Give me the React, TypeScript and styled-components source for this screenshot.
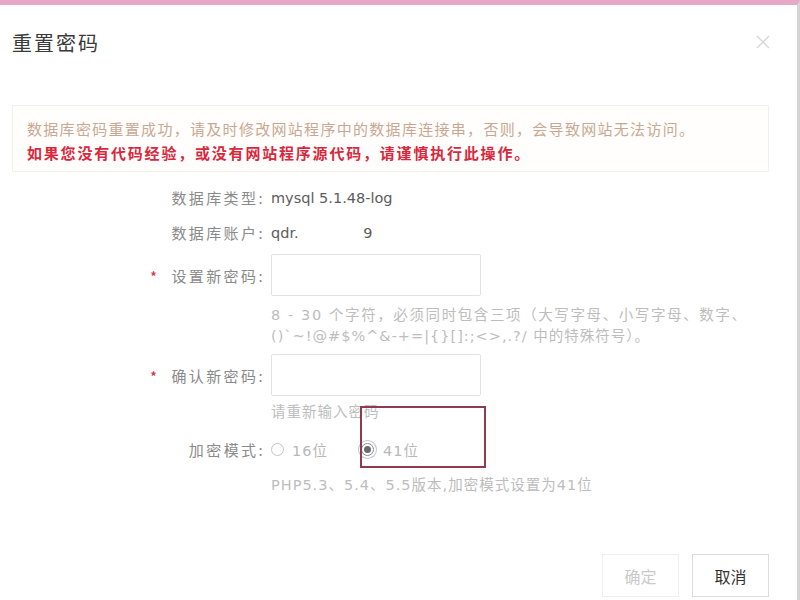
import React from "react";
import styled, { createGlobalStyle } from "styled-components";

const GlobalStyle = createGlobalStyle`
    html, body {
        margin: 0;
        padding: 0;
        background: #ffffff;
    }
    body {
        font-family: "Liberation Sans", "Noto Sans CJK SC", sans-serif;
        color: #555;
    }
`;

const Frame = styled.div`
    position: relative;
    width: 800px;
    height: 600px;
    box-sizing: border-box;
    border-top: 5px solid #e6a8c4;
    border-right: 3px solid #d4d4d4;
    background: #fff;
    overflow: hidden;
`;

const Header = styled.div`
    display: flex;
    align-items: center;
    justify-content: space-between;
    height: 74px;
    padding: 0 26px 0 12px;
`;

const Title = styled.h2`
    margin: 0;
    font-family: "Noto Sans CJK SC", sans-serif;
    font-size: 20px;
    font-weight: 400;
    letter-spacing: 2px;
    color: #3a3a3a;
`;

const Close = styled.button`
    border: none;
    background: none;
    padding: 0;
    width: 16px;
    height: 16px;
    cursor: pointer;
`;

const Notice = styled.div`
    margin: 26px 28px 0 12px;
    padding: 11px 14px 6px;
    border: 1px solid #f4efe9;
    background: #fffefc;
    font-family: "Noto Sans CJK SC", sans-serif;
    font-size: 15px;
    line-height: 24px;
`;

const NoticeLine = styled.div<{ $strong?: boolean }>`
    color: ${(p) => (p.$strong ? "#d8283e" : "#c9a893")};
    font-weight: ${(p) => (p.$strong ? 700 : 400)};
    letter-spacing: ${(p) => (p.$strong ? "1.8px" : "1.3px")};
    white-space: nowrap;
`;

const Form = styled.div`
    display: flex;
    flex-direction: column;
    margin-top: 8px;
`;

const Row = styled.div<{ $top?: number; $height?: number }>`
    display: grid;
    grid-template-columns: 265px 1fr;
    column-gap: 6px;
    align-items: center;
    margin-top: ${(p) => p.$top ?? 0}px;
    min-height: ${(p) => p.$height ?? 35}px;
`;

const Label = styled.div<{ $required?: boolean }>`
    position: relative;
    text-align: right;
    font-family: "Noto Sans CJK SC", sans-serif;
    font-size: 15px;
    letter-spacing: 2.4px;
    color: #8a8a8a;

    &::before {
        content: ${(p) => (p.$required ? '"*"' : '""')};
        position: absolute;
        left: 150px;
        top: 1px;
        color: #d8283e;
        font-size: 15px;
    }
`;

const Value = styled.div`
    font-family: "DejaVu Sans", "Noto Sans CJK SC", sans-serif;
    font-size: 14.5px;
    color: #5c5c5c;
    white-space: pre;
`;

const TextInput = styled.input`
    box-sizing: border-box;
    width: 210px;
    height: 42px;
    border: 1px solid #e2e2e2;
    border-radius: 2px;
    outline: none;
    padding: 0 10px;
    font-size: 14px;
`;

const Hint = styled.div<{ $lh?: number; $spacing?: number }>`
    font-family: "DejaVu Sans", "Noto Sans CJK SC", sans-serif;
    font-size: 14.5px;
    line-height: ${(p) => p.$lh ?? 21}px;
    letter-spacing: ${(p) => p.$spacing ?? 1}px;
    color: #bdbdbd;
    white-space: nowrap;
`;

const RadioGroup = styled.div`
    display: flex;
    align-items: center;
    gap: 30px;
`;

const RadioOption = styled.label`
    display: flex;
    align-items: center;
    gap: 8px;
    font-family: "DejaVu Sans", "Noto Sans CJK SC", sans-serif;
    font-size: 14.5px;
    letter-spacing: 1px;
    color: #b8b8b8;
`;

const RadioMark = styled.span<{ $checked?: boolean }>`
    position: relative;
    display: inline-block;
    box-sizing: border-box;
    width: 13px;
    height: 13px;
    border-radius: 50%;
    border: 1px solid ${(p) => (p.$checked ? "#8a8a8a" : "#c4c4c4")};
    background: #fff;
    box-shadow: ${(p) =>
        p.$checked ? "0 0 0 2px #fff, 0 0 0 3px #b9c3d6" : "none"};
    margin: ${(p) => (p.$checked ? "0 1px 0 3px" : "0")};

    &::after {
        content: "";
        display: ${(p) => (p.$checked ? "block" : "none")};
        position: absolute;
        left: 2px;
        top: 2px;
        width: 7px;
        height: 7px;
        border-radius: 50%;
        background: #6a6a6a;
    }
`;

const Highlight = styled.div`
    position: absolute;
    left: 360px;
    top: 401px;
    width: 126px;
    height: 62px;
    box-sizing: border-box;
    border: 2px solid #8f3a50;
    pointer-events: none;
`;

const Footer = styled.div`
    position: absolute;
    right: 28px;
    bottom: 0;
    display: flex;
    gap: 13px;
`;

const Button = styled.button<{ $disabled?: boolean }>`
    box-sizing: border-box;
    width: 77px;
    height: 43px;
    border: 1px solid ${(p) => (p.$disabled ? "#efefef" : "#dcdcdc")};
    background: #fff;
    font-family: "Noto Sans CJK SC", sans-serif;
    font-size: 16px;
    color: ${(p) => (p.$disabled ? "#c9c9c9" : "#333")};
    margin-bottom: ${(p) => (p.$disabled ? "-1px" : "3px")};
`;

const CloseIcon = () => (
    <svg width="16" height="16" viewBox="0 0 16 16">
        <path d="M2 2 L14 14 M14 2 L2 14" stroke="#d6d6d6" strokeWidth="1.3" />
    </svg>
);

export default function App() {
    return (
        <>
            <GlobalStyle />
            <Frame>
                <Header>
                    <Title>重置密码</Title>
                    <Close aria-label="关闭">
                        <CloseIcon />
                    </Close>
                </Header>

                <Notice>
                    <NoticeLine>
                        数据库密码重置成功，请及时修改网站程序中的数据库连接串，否则，会导致网站无法访问。
                    </NoticeLine>
                    <NoticeLine $strong>
                        如果您没有代码经验，或没有网站程序源代码，请谨慎执行此操作。
                    </NoticeLine>
                </Notice>

                <Form>
                    <Row>
                        <Label>数据库类型:</Label>
                        <Value>mysql 5.1.48-log</Value>
                    </Row>
                    <Row>
                        <Label>数据库账户:</Label>
                        <Value>{"qdr.              9"}</Value>
                    </Row>
                    <Row $top={4} $height={42}>
                        <Label $required>设置新密码:</Label>
                        <TextInput type="password" />
                    </Row>
                    <Row $top={9}>
                        <span />
                        <div>
                            <Hint $spacing={1.6}>
                                8 - 30 个字符，必须同时包含三项（大写字母、小写字母、数字、
                            </Hint>
                            <Hint $spacing={1}>
                                ()`~!@#$%^&amp;-+=|{"{}"}[]:;&lt;&gt;,.?/ 中的特殊符号）。
                            </Hint>
                        </div>
                    </Row>
                    <Row $top={7} $height={42}>
                        <Label $required>确认新密码:</Label>
                        <TextInput type="password" />
                    </Row>
                    <Row $top={6} $height={20}>
                        <span />
                        <Hint $lh={20}>请重新输入密码</Hint>
                    </Row>
                    <Row $top={12} $height={30}>
                        <Label>加密模式:</Label>
                        <RadioGroup>
                            <RadioOption>
                                <RadioMark />
                                16位
                            </RadioOption>
                            <RadioOption>
                                <RadioMark $checked />
                                41位
                            </RadioOption>
                        </RadioGroup>
                    </Row>
                    <Row $top={10} $height={22}>
                        <span />
                        <Hint $lh={22}>PHP5.3、5.4、5.5版本,加密模式设置为41位</Hint>
                    </Row>
                </Form>

                <Highlight />

                <Footer>
                    <Button $disabled>确定</Button>
                    <Button>取消</Button>
                </Footer>
            </Frame>
        </>
    );
}
